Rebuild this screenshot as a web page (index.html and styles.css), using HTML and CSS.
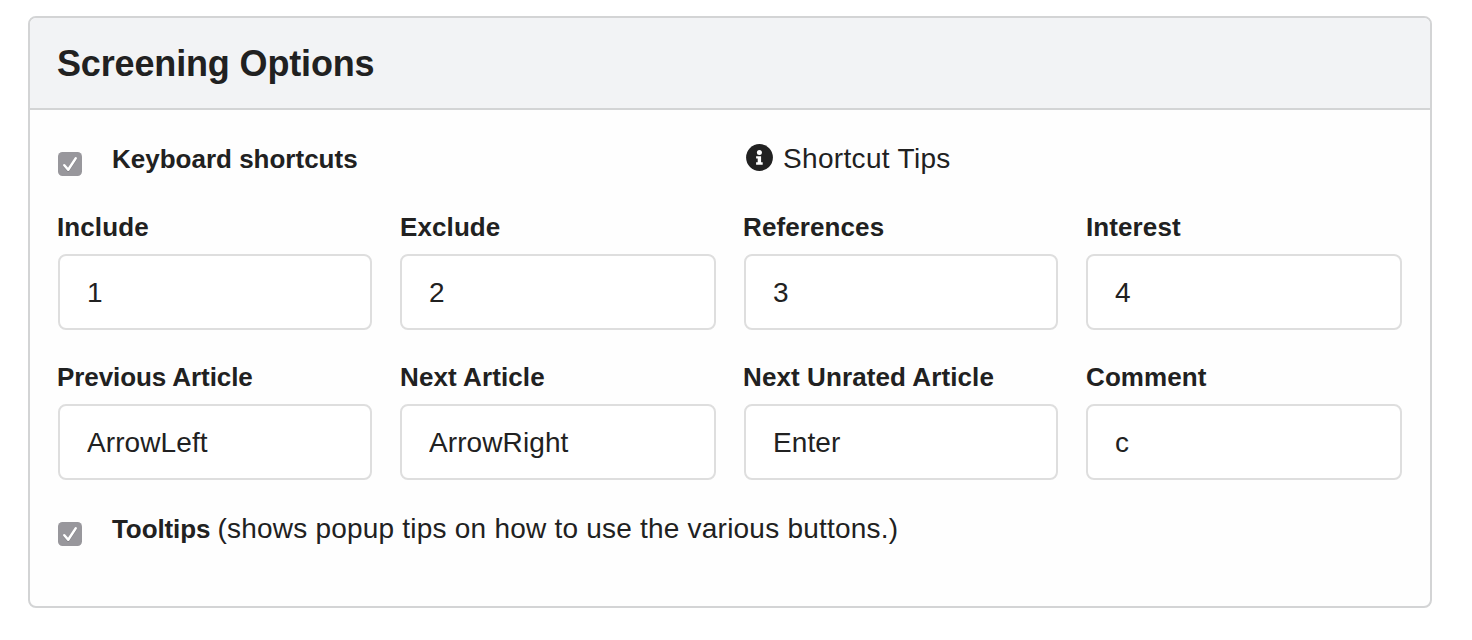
FILE: index.html
```html
<!DOCTYPE html>
<html lang="en">
<head>
<meta charset="utf-8">
<title>Screening Options</title>
<link rel="stylesheet" href="styles.css">
</head>
<body>
<section class="card">
  <header class="card-header"><h1 class="title">Screening Options</h1></header>
  <div class="card-body">
    <div class="row">
      <div class="option">
        <svg class="check" viewBox="0 0 24 24"><rect width="24" height="24" rx="4.5" fill="#98979c"/><path d="M6.3 14.2 10.2 18.8 17.7 7.4" fill="none" stroke="#828186" stroke-width="2.4" stroke-linecap="round" stroke-linejoin="round"/><path d="M6.3 13.2 10.2 17.8 17.7 6.4" fill="none" stroke="#fff" stroke-width="2.5" stroke-linecap="round" stroke-linejoin="round"/></svg>
        <strong class="name">Keyboard shortcuts</strong>
      </div>
      <div class="tips">
        <svg class="info" viewBox="0 0 27 27"><circle cx="13.5" cy="13.5" r="13.4" fill="#212121"/><circle cx="13.4" cy="8.4" r="2.5" fill="#fff"/><path d="M10.1 12.2h5v6.1h1.6v2.4h-6.6v-2.4h1.6v-3.7h-1.6z" fill="#fff"/></svg>
        <span class="text">Shortcut Tips</span>
      </div>
    </div>
    <div class="fields">
      <label class="field"><span class="label">Include</span><input class="input" value="1"></label>
      <label class="field"><span class="label">Exclude</span><input class="input" value="2"></label>
      <label class="field"><span class="label">References</span><input class="input" value="3"></label>
      <label class="field"><span class="label">Interest</span><input class="input" value="4"></label>
      <label class="field"><span class="label label-tight">Previous Article</span><input class="input" value="ArrowLeft"></label>
      <label class="field"><span class="label">Next Article</span><input class="input" value="ArrowRight"></label>
      <label class="field"><span class="label">Next Unrated Article</span><input class="input" value="Enter"></label>
      <label class="field"><span class="label">Comment</span><input class="input" value="c"></label>
    </div>
    <div class="row row-last">
      <div class="option">
        <svg class="check" viewBox="0 0 24 24"><rect width="24" height="24" rx="4.5" fill="#98979c"/><path d="M6.3 14.2 10.2 18.8 17.7 7.4" fill="none" stroke="#828186" stroke-width="2.4" stroke-linecap="round" stroke-linejoin="round"/><path d="M6.3 13.2 10.2 17.8 17.7 6.4" fill="none" stroke="#fff" stroke-width="2.5" stroke-linecap="round" stroke-linejoin="round"/></svg>
        <strong class="name name-tight">Tooltips</strong>
        <span class="text note">(shows popup tips on how to use the various buttons.)</span>
      </div>
    </div>
  </div>
</section>
</body>
</html>
```
FILE: styles.css
```css
* { box-sizing: border-box; }
body {
  margin: 0;
  padding: 16px 40px 0 28px;
  background: #fff;
  color: #212121;
  font-family: "Liberation Sans", Arial, sans-serif;
}
.card {
  height: 592px;
  border: 2px solid #d3d4d5;
  border-radius: 8px;
  overflow: hidden;
  background: #fefefe;
}
.card-header {
  height: 92px;
  padding: 25px 26px 0 27px;
  background: #f2f3f5;
  border-bottom: 2px solid #d3d4d5;
}
.title { margin: 0; font-size: 36px; line-height: 42px; font-weight: 700; letter-spacing: -0.15px; }
.card-body { padding: 32px 28px 0; }
.row {
  display: grid;
  grid-template-columns: 686px 1fr;
  height: 68px;
}
.option, .tips { display: flex; align-items: flex-start; }
.check { width: 24px; height: 24px; margin: 10px 30px 0 0; flex: none; }
.name { font-size: 26px; line-height: 34px; }
.name-tight { letter-spacing: -0.1px; }
.text { font-size: 28px; line-height: 34px; letter-spacing: 0.22px; white-space: nowrap; }
.tips .text { letter-spacing: 0.33px; }
.note { margin-left: 7px; }
.info { width: 27px; height: 27px; margin: 2px 10px 0 2px; flex: none; }
.fields {
  display: grid;
  grid-template-columns: 314px 316px 314px 316px;
  column-gap: 28px;
  row-gap: 30px;
}
.field { display: flex; flex-direction: column; height: 120px; }
.label {
  height: 44px;
  font-size: 26px;
  line-height: 34px;
  font-weight: 700;
  letter-spacing: 0.1px;
  white-space: nowrap;
}
.field:nth-child(odd) .label { margin-left: -1px; }
.label-tight { letter-spacing: -0.08px; }
.input {
  width: 100%;
  height: 76px;
  padding: 1px 26px 0 27px;
  border: 2px solid #dedede;
  border-radius: 8px;
  background: #fff;
  color: #212121;
  font: 28px "Liberation Sans", Arial, sans-serif;
  letter-spacing: 0.1px;
  outline: none;
}
.row-last { margin-top: 32px; }
```
